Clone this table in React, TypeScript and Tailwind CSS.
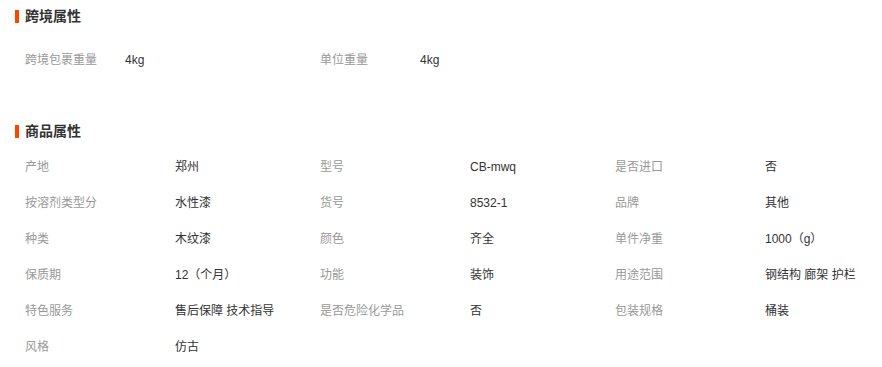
const crossBorder = [
  { label: '跨境包裹重量', value: '4kg' },
  { label: '单位重量', value: '4kg' },
];

const attrs = [
  { label: '产地', value: '郑州' },
  { label: '型号', value: 'CB-mwq' },
  { label: '是否进口', value: '否' },
  { label: '按溶剂类型分', value: '水性漆' },
  { label: '货号', value: '8532-1' },
  { label: '品牌', value: '其他' },
  { label: '种类', value: '木纹漆' },
  { label: '颜色', value: '齐全' },
  { label: '单件净重', value: '1000（g）' },
  { label: '保质期', value: '12（个月）' },
  { label: '功能', value: '装饰' },
  { label: '用途范围', value: '钢结构 廊架 护栏' },
  { label: '特色服务', value: '售后保障 技术指导' },
  { label: '是否危险化学品', value: '否' },
  { label: '包装规格', value: '桶装' },
  { label: '风格', value: '仿古' },
];

function Title({ text }: { text: string }) {
  return (
    <div className="flex h-[24px] items-center">
      <span className="h-[13px] w-[4px] bg-[#ff4400]" />
      <h3 className="ml-[6px] text-[14px] font-bold leading-[24px] text-[#333]">{text}</h3>
    </div>
  );
}

export default function App() {
  return (
    <div
      className="h-[367px] w-[882px] bg-white pl-[15px] pt-[4px]"
      style={{ fontFamily: '"Liberation Sans", "Noto Sans CJK SC", sans-serif' }}
    >
      {/* 跨境属性 */}
      <Title text="跨境属性" />
      <div className="mt-[14px] grid grid-cols-[295px_295px] pl-[10px]">
        {crossBorder.map((item) => (
          <div key={item.label} className="flex h-[36px] items-center text-[12px]">
            <span className="w-[100px] text-[#999]">{item.label}</span>
            <span className="text-[#333]">{item.value}</span>
          </div>
        ))}
      </div>

      {/* 商品属性 */}
      <div className="mt-[41px]">
        <Title text="商品属性" />
      </div>
      <div className="mt-[6px] grid grid-cols-[295px_295px_295px] pl-[10px]">
        {attrs.map((item) => (
          <div key={item.label} className="flex h-[36px] items-center text-[12px]">
            <span className="w-[150px] text-[#999]">{item.label}</span>
            <span className="text-[#333]">{item.value}</span>
          </div>
        ))}
      </div>
    </div>
  );
}
